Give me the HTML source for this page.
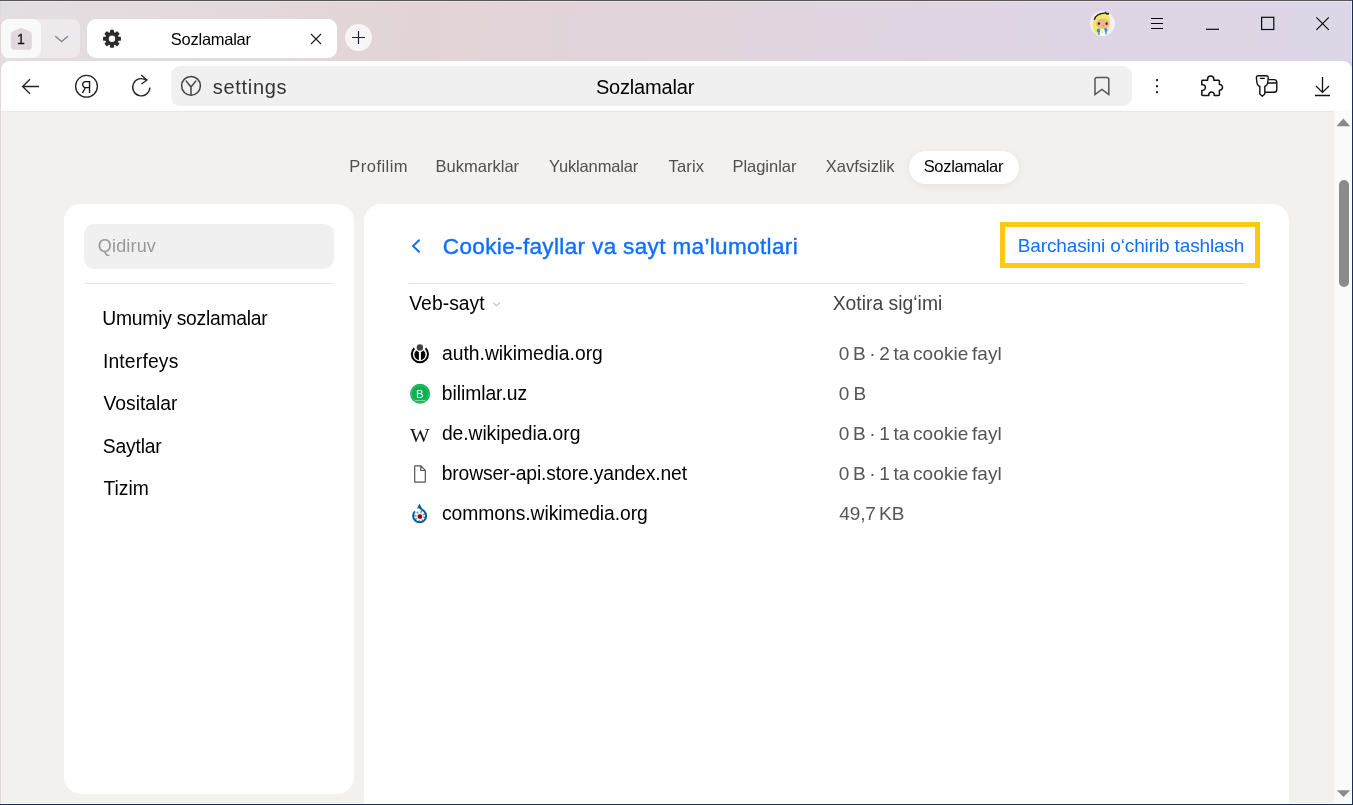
<!DOCTYPE html>
<html lang="uz"><head><meta charset="utf-8"><title>Sozlamalar</title>
<style>
html,body{margin:0;padding:0}
body{width:1353px;height:805px;overflow:hidden;position:relative;background:#f2f1ef;font-family:"Liberation Sans",sans-serif}
.a{position:absolute}
.t{position:absolute;white-space:pre;line-height:1;font-family:"Liberation Sans",sans-serif}
#chrome{left:0;top:0;width:1353px;height:120px;background:linear-gradient(95deg,#e3dee2 0%,#e4dbde 11%,#e2d4d6 31%,#e1d4dc 50%,#dfd5e3 70%,#ddd6e6 100%)}
#topline{left:0;top:0;width:1353px;height:1px;background:#5a5659}
#rightline{left:1352px;top:0;width:1px;height:805px;background:#12305a}
#bottomline{left:0;top:804px;width:1353px;height:1px;background:#12305a}
#leftline{left:0;top:1px;width:1px;height:804px;background:#e2d8dc}
#grp{left:1px;top:19px;width:79px;height:39px;border-radius:8px;background:rgba(255,255,255,.38)}
#grp1{left:1px;top:19px;width:40px;height:39px;border-radius:8px;background:#faf9fa}
#tab{left:87px;top:19px;width:250px;height:39px;border-radius:9px;background:#fff}
#plus{left:344.5px;top:24px;width:27px;height:27px;border-radius:50%;background:rgba(255,255,255,.76)}
#toolbar{left:1px;top:61px;width:1351px;height:50px;border-radius:9px 9px 0 0;background:#fff}
#omni{left:171px;top:66px;width:961px;height:40px;border-radius:9px;background:#f0f0f0}
#page{left:1px;top:111px;width:1333px;height:693px;background:#f2f1ef}
#sbtrack{left:1334px;top:111px;width:17.5px;height:693px;background:#fafafa}
#sbthumb{left:1338.5px;top:179.5px;width:10.5px;height:107.5px;border-radius:5.5px;background:#8b8b8b}
#pill{left:909px;top:151px;width:110px;height:32.5px;border-radius:17px;background:#fff;box-shadow:0 2px 8px rgba(0,0,0,.06)}
#side{left:64px;top:204px;width:290px;height:590px;border-radius:17px;background:#fff}
#main{left:364px;top:204px;width:925px;height:640px;border-radius:17px;background:#fff}
#sbox{left:84px;top:224px;width:250px;height:45px;border-radius:10px;background:#f0f0f0}
#sdiv{left:84px;top:282.5px;width:250px;height:1.5px;background:#e6e6e6}
#mdiv{left:409px;top:283px;width:835px;height:1px;background:#e3e3e3}
#ybox{left:1000px;top:221.5px;width:250px;height:36px;border:5px solid #fbca0f;background:#fff}
svg{position:absolute;left:0;top:0;overflow:visible}
#txt{left:0;top:0;width:1353px;height:805px;will-change:transform}
#tbline{left:1px;top:110.5px;width:1350px;height:1px;background:#e7e6e5}
#hl1{left:1351px;top:111px;width:1px;height:693px;background:#fff}
#hl2{left:1px;top:803px;width:1351px;height:1px;background:#fdfdfd}
#hl3{left:1351px;top:1px;width:1px;height:60px;background:#ebe5ef}
#hl4{left:1px;top:1px;width:1351px;height:1px;background:rgba(255,255,255,.3)}

</style></head>
<body>
<div class="a" id="chrome"></div>
<div class="a" id="grp"></div>
<div class="a" id="grp1"></div>
<div class="a" id="tab"></div>
<div class="a" id="plus"></div>
<div class="a" id="toolbar"></div>
<div class="a" id="omni"></div>
<div class="a" id="page"></div>
<div class="a" id="tbline"></div>
<div class="a" id="sbtrack"></div>
<div class="a" id="sbthumb"></div>
<div class="a" id="pill"></div>
<div class="a" id="side"></div>
<div class="a" id="main"></div>
<div class="a" id="sbox"></div>
<div class="a" id="sdiv"></div>
<div class="a" id="mdiv"></div>
<div class="a" id="ybox"></div>
<div class="a" id="hl1"></div><div class="a" id="hl2"></div><div class="a" id="hl3"></div><div class="a" id="hl4"></div>
<div class="a" id="leftline"></div>
<div class="a" id="topline"></div>
<div class="a" id="rightline"></div>
<div class="a" id="bottomline"></div>
<svg width="1353" height="805" viewBox="0 0 1353 805" fill="none">
<!-- tab group badge -->
<path d="M21.3 27.7 L30.2 31.6 Q31.9 32.4 31.9 34.3 V46.3 Q31.9 49.8 28.4 49.8 H14.3 Q10.8 49.8 10.8 46.3 V34.3 Q10.8 32.4 12.5 31.6 Z" fill="#e0d8de"/>
<path d="M55.3 36.2 L61.6 41.6 L67.9 36.2" stroke="#8a8589" stroke-width="1.4"/>
<!-- gear -->
<g transform="translate(112 38.8)" fill="#2b2b2b">
<g id="teeth"><rect x="-2" y="-9" width="4" height="18" rx="0.8"/><rect x="-9" y="-2" width="18" height="4" rx="0.8"/></g>
<g transform="rotate(45)"><rect x="-2" y="-9" width="4" height="18" rx="0.8"/><rect x="-9" y="-2" width="18" height="4" rx="0.8"/></g>
<circle r="6.8"/><circle r="3.2" fill="#fff"/>
</g>
<!-- tab close -->
<path d="M311 34 L321 44 M321 34 L311 44" stroke="#1a1a1a" stroke-width="1.1"/>
<!-- plus -->
<path d="M352 37.5 H365 M358.5 31 V44" stroke="#1c2633" stroke-width="1.2"/>
<!-- window controls -->
<path d="M1151 18.5 H1163 M1151 23.5 H1163 M1151 28.5 H1163" stroke="#0a0a0a" stroke-width="1.2"/>
<path d="M1206 29.3 H1219" stroke="#0a0a0a" stroke-width="1.2"/>
<rect x="1261.6" y="17.3" width="12.2" height="12.2" stroke="#0a0a0a" stroke-width="1.2"/>
<path d="M1316.4 17.4 L1328.8 29.8 M1328.8 17.4 L1316.4 29.8" stroke="#0a0a0a" stroke-width="1.2"/>
<!-- avatar -->
<g>
<circle cx="1102.5" cy="23.6" r="12.6" fill="#f3eff3"/>
<path d="M1097.4 34.6 C1094.6 32.6 1092.9 29.6 1092.8 25 C1092.7 17.5 1096.6 12.7 1102.6 12.7 C1108 12.7 1110.4 16.6 1110.2 22 C1110.1 26 1109 29 1107.4 30.6 L1101 34.9 Z" fill="#f2e868"/>
<ellipse cx="1102.7" cy="23.5" rx="6.6" ry="4.9" fill="#f1b690"/>
<path d="M1095.6 22.4 C1097 19.6 1100 18.4 1103 18.3 C1106 18.2 1108.4 18.8 1109.8 20.4 C1109.6 15.8 1106.6 13.4 1102.4 13.5 C1098 13.6 1095.2 17.4 1095.6 22.4 Z" fill="#f2e868"/>
<ellipse cx="1098.9" cy="23.7" rx="1.15" ry="1.35" fill="#2f2c38"/><ellipse cx="1106.6" cy="23.7" rx="1.15" ry="1.35" fill="#2f2c38"/>
<circle cx="1097.6" cy="25.2" r="1" fill="#f49ab0" opacity=".7"/><circle cx="1107.8" cy="25.2" r="1" fill="#f49ab0" opacity=".7"/>
<circle cx="1103.4" cy="25.6" r="0.65" fill="#e0408a"/>
<path d="M1094.3 19.8 C1095.4 15.6 1099.4 13.3 1104.8 13.1" stroke="#1d1d1d" stroke-width="1.4"/>
<path d="M1104.4 12.9 L1105.7 11.3 L1106.9 13 L1109.2 12.8 L1108.9 14.8 L1106.4 14.4 Z" fill="#1d1d1d"/>
<circle cx="1098.6" cy="30.4" r="1.9" fill="#3d8df0"/><circle cx="1105.6" cy="30" r="1.9" fill="#3d8df0"/>
<path d="M1098 31.4 L1099.8 31 L1099.6 35 L1098.4 35 Z M1105.2 31 L1106.6 31.2 L1106.8 34 L1105.4 34.4 Z" fill="#3d8df0"/>
<path d="M1100.2 29.2 L1104.4 29.2 L1105 34 L1102.6 36 L1100 34.6 Z" fill="#fff"/>
<path d="M1101.6 31.4 L1103.4 31.4 L1102.5 33.6 Z" fill="#f2b8a0"/>
</g>
<!-- back arrow -->
<path d="M39 86.5 H22.6 M30 79.2 L22.6 86.5 L30 93.8" stroke="#222" stroke-width="1.3"/>
<!-- Ya circle -->
<circle cx="86.5" cy="86.3" r="10.9" stroke="#222" stroke-width="1.3"/>
<!-- reload -->
<path d="M146.3 80.3 A8.6 8.6 0 1 0 149.9 87.6" stroke="#222" stroke-width="1.3"/>
<path d="M141.2 74.9 L147 80 L141.4 84" stroke="#222" stroke-width="1.3"/>
<!-- Y icon -->
<circle cx="191" cy="85.8" r="9.4" stroke="#444" stroke-width="1.5"/>
<path d="M185.9 80.6 L191 87 L196.2 80.6 M191 87 V95" stroke="#444" stroke-width="1.5"/>
<!-- bookmark -->
<path d="M1095 94.6 V79.6 Q1095 77.5 1097.1 77.5 H1106.7 Q1108.8 77.5 1108.8 79.6 V94.6 L1101.9 89.4 Z" stroke="#555" stroke-width="1.5" stroke-linejoin="miter"/>
<!-- dots -->
<rect x="1156" y="79.1" width="2" height="2" fill="#222"/><rect x="1156" y="85.2" width="2" height="2" fill="#222"/><rect x="1156" y="91.2" width="2" height="2" fill="#222"/>
<!-- puzzle -->
<path d="M1202 80.2 H1207.6 V79.2 A3.1 3.1 0 1 1 1213.8 79.2 V80.2 H1218.6 Q1219.4 80.2 1219.4 81 V84.4 H1219.6 A2.9 2.9 0 1 1 1219.6 90.2 H1219.4 V94.6 Q1219.4 95.4 1218.6 95.4 H1214.2 V94.6 A2.7 2.7 0 1 0 1208.8 94.6 V95.4 H1202.6 Q1201.8 95.4 1201.8 94.6 V90.4 H1202.6 A2.8 2.8 0 1 0 1202.6 84.8 H1201.8 V81 Q1201.8 80.2 1202.6 80.2 Z" stroke="#111" stroke-width="1.5" stroke-linejoin="round"/>
<!-- key + card -->
<path d="M1258.6 75.7 H1266 Q1268.4 75.7 1268.2 78 L1267.6 83 Q1267.4 84.8 1265.8 85.8 L1264.8 86.4 V94 L1262.3 96.2 L1259.8 94 V86.4 L1258.8 85.8 Q1257.2 84.8 1257 83 L1256.4 78 Q1256.2 75.7 1258.6 75.7 Z" stroke="#111" stroke-width="1.4" stroke-linejoin="round"/>
<path d="M1259.8 78.4 H1264.8" stroke="#111" stroke-width="1.3"/>
<path d="M1268.4 79.6 H1274 Q1276.8 79.6 1276.8 82.4 V89.4 Q1276.8 92.2 1274 92.2 H1265 M1268 83 H1276.8" stroke="#111" stroke-width="1.4"/>
<!-- download -->
<path d="M1322.5 77 V92.4 M1316 86 L1322.5 92.4 L1329 86 M1315 95.5 H1330" stroke="#111" stroke-width="1.3"/>
<!-- scroll arrows -->
<path d="M1336.5 126.3 L1343.3 118.6 L1350.2 126.3 Z" fill="#8a8a8a"/>
<path d="M1336.8 790.2 L1350.2 790.2 L1343.5 797 Z" fill="#8a8a8a"/>
<!-- header back chevron -->
<path d="M419.6 239.8 L413 246 L419.6 252.2" stroke="#0f6fff" stroke-width="2"/>
<!-- sort chevron -->
<path d="M493 302.4 L496.5 305.8 L500 302.4" stroke="#c8c8c8" stroke-width="1.3"/>
<!-- wikimedia -->
<g>
<path d="M414.3 348.3 A8.1 8.1 0 1 0 425.5 348.3" stroke="#000" stroke-width="2"/>
<circle cx="419.9" cy="354.6" r="5.6" fill="#000"/>
<circle cx="419.9" cy="347.5" r="4.6" fill="#fff"/>
<path d="M419.9 350 V360.6" stroke="#fff" stroke-width="2"/>
<circle cx="419.9" cy="347.5" r="3.2" fill="#444"/>
</g>
<!-- bilimlar -->
<circle cx="420.1" cy="393.8" r="10" fill="#10af52"/>
<circle cx="420.1" cy="393.8" r="8.6" stroke="#5fcb8b" stroke-width="0.5"/>
<path d="M415 400.4 H425.4" stroke="#bfead1" stroke-width="0.7"/>
<!-- file -->
<path d="M414.7 465.8 H420.8 L425.3 470.3 V482.1 H414.7 Z M420.8 465.8 V470.5 H425.3" stroke="#555" stroke-width="1.2" stroke-linejoin="round"/>
<!-- commons -->
<g>
<circle cx="419.9" cy="516.6" r="4.6" stroke="#5d9cc6" stroke-width="2.4" stroke-dasharray="1.5 2.1"/>
<path d="M414.9 511.4 A6.5 6.5 0 1 0 424.2 511.2 C422.5 509.6 420.6 509 419.8 507.6" stroke="#00609c" stroke-width="2" />
<path d="M419.4 503.6 L421.8 508 L417 508.6 Z" fill="#00609c"/>
<circle cx="419.9" cy="516.6" r="2.4" fill="#990000"/>
</g>
</svg>

<div class="a" id="txt">
<span class="t" id="tabnum" style="left:16.92px;top:32.00px;font-size:14px;color:#111;letter-spacing:0.000px;-webkit-text-stroke:0.3px #111;">1</span>
<span class="t" id="tabtitle" style="left:170.85px;top:31.00px;font-size:16.5px;color:#000;letter-spacing:-0.264px;">Sozlamalar</span>
<span class="t" id="url" style="left:212.81px;top:77.00px;font-size:20px;color:#333;letter-spacing:0.693px;">settings</span>
<span class="t" id="omnititle" style="left:595.89px;top:77.00px;font-size:20px;color:#000;letter-spacing:-0.165px;">Sozlamalar</span>
<span class="t" id="ya" style="left:81.46px;top:79.00px;font-size:16.5px;color:#111;letter-spacing:0.000px;transform:scaleX(0.87);transform-origin:0 0;">Я</span>
<span class="t" id="n1" style="left:349.34px;top:158.00px;font-size:16.5px;color:#4f4f4f;letter-spacing:0.459px;">Profilim</span>
<span class="t" id="n2" style="left:435.58px;top:158.00px;font-size:16.5px;color:#4f4f4f;letter-spacing:0.009px;">Bukmarklar</span>
<span class="t" id="n3" style="left:548.94px;top:158.00px;font-size:16.5px;color:#4f4f4f;letter-spacing:-0.140px;">Yuklanmalar</span>
<span class="t" id="n4" style="left:668.59px;top:158.00px;font-size:16.5px;color:#4f4f4f;letter-spacing:0.157px;">Tarix</span>
<span class="t" id="n5" style="left:732.50px;top:158.00px;font-size:16.5px;color:#4f4f4f;letter-spacing:-0.038px;">Plaginlar</span>
<span class="t" id="n6" style="left:825.77px;top:158.00px;font-size:16.5px;color:#4f4f4f;letter-spacing:-0.007px;">Xavfsizlik</span>
<span class="t" id="n7" style="left:923.67px;top:158.00px;font-size:16.5px;color:#000;letter-spacing:-0.307px;">Sozlamalar</span>
<span class="t" id="search" style="left:97.80px;top:237.00px;font-size:18px;color:#999;letter-spacing:0.171px;">Qidiruv</span>
<span class="t" id="s1" style="left:102.37px;top:309.00px;font-size:19.3px;color:#000;letter-spacing:-0.242px;">Umumiy sozlamalar</span>
<span class="t" id="s2" style="left:102.88px;top:352.00px;font-size:19.3px;color:#000;letter-spacing:0.187px;">Interfeys</span>
<span class="t" id="s3" style="left:103.55px;top:394.00px;font-size:19.3px;color:#000;letter-spacing:-0.007px;">Vositalar</span>
<span class="t" id="s4" style="left:102.84px;top:437.00px;font-size:19.3px;color:#000;letter-spacing:-0.191px;">Saytlar</span>
<span class="t" id="s5" style="left:103.52px;top:479.00px;font-size:19.3px;color:#000;letter-spacing:-0.010px;">Tizim</span>
<span class="t" id="h1" style="left:442.85px;top:236.00px;font-size:22.5px;color:#0f6fff;letter-spacing:0.359px;-webkit-text-stroke:0.4px #0f6fff;">Cookie-fayllar va sayt ma’lumotlari</span>
<span class="t" id="btn" style="left:1017.79px;top:236.00px;font-size:19px;color:#0f6fff;letter-spacing:-0.134px;">Barchasini oʻchirib tashlash</span>
<span class="t" id="c1" style="left:409.27px;top:294.00px;font-size:19.3px;color:#000;letter-spacing:0.051px;">Veb-sayt</span>
<span class="t" id="c2" style="left:832.63px;top:294.00px;font-size:19.3px;color:#444;letter-spacing:0.028px;">Xotira sigʻimi</span>
<span class="t" id="d1" style="left:442.01px;top:344.00px;font-size:19.3px;color:#000;letter-spacing:0.001px;">auth.wikimedia.org</span>
<span class="t" id="d2" style="left:441.71px;top:384.00px;font-size:19.3px;color:#000;letter-spacing:-0.038px;">bilimlar.uz</span>
<span class="t" id="d3" style="left:441.89px;top:424.00px;font-size:19.3px;color:#000;letter-spacing:-0.056px;">de.wikipedia.org</span>
<span class="t" id="d4" style="left:441.71px;top:464.00px;font-size:19.3px;color:#000;letter-spacing:-0.124px;">browser-api.store.yandex.net</span>
<span class="t" id="d5" style="left:442.03px;top:504.00px;font-size:19.3px;color:#000;letter-spacing:-0.051px;">commons.wikimedia.org</span>
<span class="t" id="m1" style="left:838.78px;top:344.00px;font-size:19px;color:#555;letter-spacing:0.081px;word-spacing:-1.8px;">0 B · 2 ta cookie fayl</span>
<span class="t" id="m2" style="left:838.78px;top:384.00px;font-size:19px;color:#555;letter-spacing:0.345px;word-spacing:-1.8px;">0 B</span>
<span class="t" id="m3" style="left:838.78px;top:424.00px;font-size:19px;color:#555;letter-spacing:0.081px;word-spacing:-1.8px;">0 B · 1 ta cookie fayl</span>
<span class="t" id="m4" style="left:838.78px;top:464.00px;font-size:19px;color:#555;letter-spacing:0.081px;word-spacing:-1.8px;">0 B · 1 ta cookie fayl</span>
<span class="t" id="m5" style="left:839.29px;top:504.00px;font-size:19px;color:#555;letter-spacing:-0.123px;word-spacing:-1.8px;">49,7 KB</span>
<span class="t" id="wW" style="left:410.08px;top:427.00px;font-size:18.3px;color:#111;letter-spacing:0.000px;font-family:'Liberation Serif',serif;transform:scaleX(1.14);transform-origin:0 0;">W</span>
<span class="t" id="bB" style="left:416.04px;top:389.00px;font-size:11.5px;color:#fff;letter-spacing:0.000px;">B</span>
</div>
</body></html>
